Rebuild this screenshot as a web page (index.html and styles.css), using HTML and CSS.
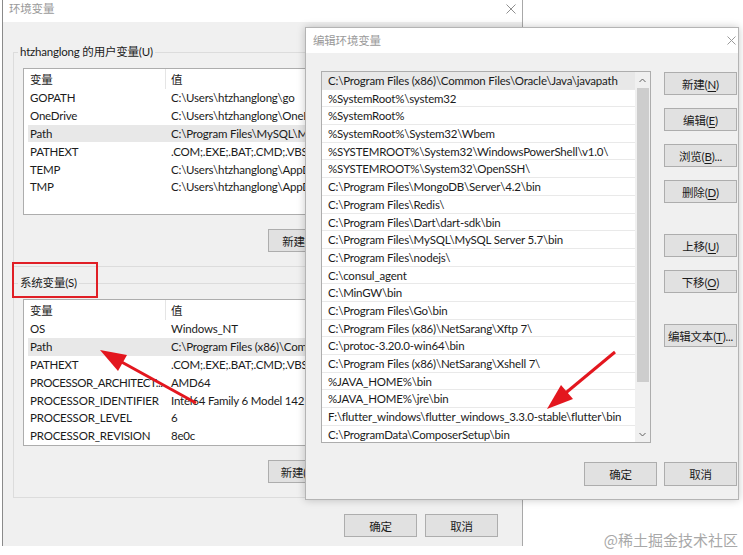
FILE: index.html
```html
<!DOCTYPE html>
<html lang="zh-CN">
<head>
    <meta charset="UTF-8">
    <title>环境变量</title>
    <link rel="stylesheet" href="styles.css">
</head>
<body>
<div class="desk">

    <!-- 环境变量 窗口 -->
    <div class="env-window">
        <div class="titlebar">
            <span class="title">环境变量</span>
            <svg class="close" width="10" height="10" viewBox="0 0 10 10"><path d="M0.5 0.5 L9.5 9.5 M9.5 0.5 L0.5 9.5" stroke="#8f8f8f" stroke-width="1"/></svg>
        </div>
        <div class="env-body">
            <fieldset class="group">
                <legend>htzhanglong 的用户变量(U)</legend>
                <div class="var-list">
                    <div class="var-head"><span>变量</span><span>值</span></div>
                    <div class="var-row"><span>GOPATH</span><span>C:\Users\htzhanglong\go</span></div>
                    <div class="var-row"><span>OneDrive</span><span>C:\Users\htzhanglong\OneDrive</span></div>
                    <div class="var-row sel"><span>Path</span><span>C:\Program Files\MySQL\MySQL Server 5.7\bin;</span></div>
                    <div class="var-row"><span>PATHEXT</span><span>.COM;.EXE;.BAT;.CMD;.VBS;.VBE;.JS;.JSE</span></div>
                    <div class="var-row"><span>TEMP</span><span>C:\Users\htzhanglong\AppData\Local\Temp</span></div>
                    <div class="var-row"><span>TMP</span><span>C:\Users\htzhanglong\AppData\Local\Temp</span></div>
                </div>
                <div class="btn-row">
                    <button class="btn">新建(<u>N</u>)...</button>
                </div>
            </fieldset>

            <fieldset class="group">
                <legend>系统变量(S)</legend>
                <div class="var-list">
                    <div class="var-head"><span>变量</span><span>值</span></div>
                    <div class="var-row"><span>OS</span><span>Windows_NT</span></div>
                    <div class="var-row sel"><span>Path</span><span>C:\Program Files (x86)\Common Files\Oracle\Java\javapath;</span></div>
                    <div class="var-row"><span>PATHEXT</span><span>.COM;.EXE;.BAT;.CMD;.VBS;.VBE;.JS;.JSE;.WSF</span></div>
                    <div class="var-row"><span class="tight">PROCESSOR_ARCHITECT...</span><span>AMD64</span></div>
                    <div class="var-row"><span>PROCESSOR_IDENTIFIER</span><span>Intel64 Family 6 Model 142 Stepping 10</span></div>
                    <div class="var-row"><span>PROCESSOR_LEVEL</span><span>6</span></div>
                    <div class="var-row"><span>PROCESSOR_REVISION</span><span>8e0c</span></div>
                </div>
                <div class="btn-row">
                    <button class="btn">新建(<u>W</u>)...</button>
                </div>
            </fieldset>

            <div class="dialog-btns">
                <button class="btn">确定</button>
                <button class="btn">取消</button>
            </div>
        </div>
    </div>

    <!-- 编辑环境变量 对话框 -->
    <div class="edit-dialog">
        <div class="titlebar dlg-title">
            <span class="title">编辑环境变量</span>
            <svg class="close" width="9" height="9" viewBox="0 0 9 9"><path d="M0.5 0.5 L8.5 8.5 M8.5 0.5 L0.5 8.5" stroke="#9a9a9a" stroke-width="1"/></svg>
        </div>
        <div class="edit-body">
            <div class="edit-main">
                <div class="path-list">
                    <div class="path-rows">
                        <div class="path-row sel">C:\Program Files (x86)\Common Files\Oracle\Java\javapath</div>
                        <div class="path-row">%SystemRoot%\system32</div>
                        <div class="path-row">%SystemRoot%</div>
                        <div class="path-row">%SystemRoot%\System32\Wbem</div>
                        <div class="path-row">%SYSTEMROOT%\System32\WindowsPowerShell\v1.0\</div>
                        <div class="path-row">%SYSTEMROOT%\System32\OpenSSH\</div>
                        <div class="path-row">C:\Program Files\MongoDB\Server\4.2\bin</div>
                        <div class="path-row">C:\Program Files\Redis\</div>
                        <div class="path-row">C:\Program Files\Dart\dart-sdk\bin</div>
                        <div class="path-row">C:\Program Files\MySQL\MySQL Server 5.7\bin</div>
                        <div class="path-row">C:\Program Files\nodejs\</div>
                        <div class="path-row">C:\consul_agent</div>
                        <div class="path-row">C:\MinGW\bin</div>
                        <div class="path-row">C:\Program Files\Go\bin</div>
                        <div class="path-row">C:\Program Files (x86)\NetSarang\Xftp 7\</div>
                        <div class="path-row">C:\protoc-3.20.0-win64\bin</div>
                        <div class="path-row">C:\Program Files (x86)\NetSarang\Xshell 7\</div>
                        <div class="path-row">%JAVA_HOME%\bin</div>
                        <div class="path-row">%JAVA_HOME%\jre\bin</div>
                        <div class="path-row">F:\flutter_windows\flutter_windows_3.3.0-stable\flutter\bin</div>
                        <div class="path-row">C:\ProgramData\ComposerSetup\bin</div>
                    </div>
                    <div class="scrollbar">
                        <div class="sb-arrow"><svg width="7" height="5" viewBox="0 0 7 5"><path d="M0.5 4 L3.5 1 L6.5 4" fill="none" stroke="#606060" stroke-width="1"/></svg></div>
                        <div class="sb-thumb"></div>
                        <div class="sb-space"></div>
                        <div class="sb-arrow"><svg width="7" height="5" viewBox="0 0 7 5"><path d="M0.5 1 L3.5 4 L6.5 1" fill="none" stroke="#606060" stroke-width="1"/></svg></div>
                    </div>
                </div>
                <div class="side-btns">
                    <button class="btn">新建(<u>N</u>)</button>
                    <button class="btn">编辑(<u>E</u>)</button>
                    <button class="btn">浏览(<u>B</u>)...</button>
                    <button class="btn">删除(<u>D</u>)</button>
                    <button class="btn gap-top">上移(<u>U</u>)</button>
                    <button class="btn">下移(<u>O</u>)</button>
                    <button class="btn gap-top">编辑文本(<u>T</u>)...</button>
                </div>
            </div>
            <div class="edit-foot">
                <button class="btn">确定</button>
                <button class="btn">取消</button>
            </div>
        </div>
    </div>

    <!-- 标注 -->
    <div class="mark-box"></div>
    <svg class="arrows" width="743" height="555" viewBox="0 0 743 555">
        <line x1="196" y1="403" x2="118" y2="360" stroke="#e3161e" stroke-width="3"/>
        <polygon points="100,350 127,355 118,371" fill="#e3161e"/>
        <line x1="615" y1="352" x2="562" y2="396" stroke="#e3161e" stroke-width="3"/>
        <polygon points="547,409 573,399 561,385" fill="#e3161e"/>
    </svg>
    <div class="watermark">@稀土掘金技术社区</div>
</div>
</body>
</html>
```

FILE: styles.css
```css
* { margin: 0; padding: 0; box-sizing: border-box; }

body {
    font-family: Lato, "Noto Sans CJK SC", sans-serif;
    font-size: 11.5px;
    letter-spacing: -0.2px;
    color: #1b1b1b;
    background: #ffffff;
}

.desk {
    position: relative;
    width: 743px;
    height: 555px;
    overflow: hidden;
}

/* 公共 */
.titlebar {
    display: flex;
    align-items: center;
    justify-content: space-between;
    background: #ffffff;
}

.title {
    color: #9a9a9a;
    line-height: 16px;
}

.close { display: block; }

.btn {
    width: 73px;
    height: 23px;
    background: #e1e1e1;
    border: 1px solid #adadad;
    font-family: inherit;
    font-size: 11.5px;
    letter-spacing: inherit;
    color: #1b1b1b;
    white-space: nowrap;
}

.btn u { text-decoration-thickness: 1px; text-underline-offset: 2px; }

/* 环境变量 窗口 */
.env-window {
    position: absolute;
    left: 2px;
    top: 0;
    width: 521px;
    height: 546px;
    background: #f0f0f0;
    border-left: 1px solid #8a8a8a;
    border-right: 1px solid #a8a8a8;
}

.env-window .titlebar {
    height: 22px;
    padding: 0 6px 4px 6px;
}

.env-body {
    padding: 22px 10px 0 10px;
}

.group {
    border: 1px solid #dcdcdc;
    padding: 8px 9px 14px;
}

.group + .group { margin-top: 8px; }

.group legend {
    line-height: 16px;
    padding: 0 2px;
    margin-left: -5px;
    color: #1b1b1b;
}

.var-list {
    height: 147px;
    background: #ffffff;
    border: 1px solid #adadad;
    padding-left: 4px;
    overflow: hidden;
}

/* 值列只露出到对话框左缘 */
.var-head,
.var-row {
    display: grid;
    grid-template-columns: 138px 139px;
    white-space: nowrap;
}

.var-head { height: 20px; }

.var-head span {
    display: flex;
    align-items: center;
    padding-left: 5px;
}

.var-head span:first-child {
    padding-left: 2px;
    border-right: 1px solid #e5e5e5;
}

.var-row {
    height: 17.8px;
    align-items: center;
}

.var-row span {
    overflow: hidden;
    padding-left: 5px;
}

.var-row span:first-child { padding-left: 2px; }

.var-row .tight { letter-spacing: -0.4px; }

.var-row.sel { background: #e8e8e8; }

.btn-row {
    display: flex;
    margin-top: 14px;
    padding-left: 245px;
}

.dialog-btns {
    display: flex;
    justify-content: flex-end;
    gap: 8px;
    margin-top: 16px;
    padding-right: 14px;
}

/* 编辑环境变量 对话框 */
.edit-dialog {
    position: absolute;
    left: 305px;
    top: 27px;
    width: 434px;
    height: 473px;
    background: #f0f0f0;
    border: 1px solid #b4b4b4;
    box-shadow: 0 0 8px rgba(0, 0, 0, 0.22);
    display: flex;
    flex-direction: column;
}

.dlg-title {
    height: 25px;
    padding: 0 2px 0 7px;
}

.edit-body {
    padding: 18px 0 0 15px;
}

.edit-main {
    display: flex;
    gap: 13px;
}

.path-list {
    width: 330px;
    height: 372px;
    background: #ffffff;
    border: 1px solid #adadad;
    display: flex;
}

.path-rows {
    flex: 1;
    overflow: hidden;
}

.path-row {
    height: 17.7px;
    line-height: 17px;
    padding-left: 6px;
    border-bottom: 1px solid #e9e9e9;
    white-space: nowrap;
    overflow: hidden;
}

.path-row.sel { background: #e8e8e8; }

.scrollbar {
    width: 15px;
    background: #f0f0f0;
    display: flex;
    flex-direction: column;
}

.sb-arrow {
    height: 16px;
    display: flex;
    align-items: center;
    justify-content: center;
}

.sb-thumb {
    height: 294px;
    margin: 0 1px 0 2px;
    background: #cdcdcd;
}

.sb-space { flex: 1; }

.side-btns {
    display: flex;
    flex-direction: column;
    gap: 13px;
    padding-top: 1px;
}

.side-btns .gap-top { margin-top: 18px; }

.edit-foot {
    display: flex;
    justify-content: flex-end;
    gap: 7px;
    margin-top: 19px;
    padding-right: 1px;
}

.edit-foot .btn { height: 24px; }

/* 标注 */
.mark-box {
    position: absolute;
    left: 12px;
    top: 262px;
    width: 86px;
    height: 36px;
    border: 2px solid #e01f26;
}

.arrows {
    position: absolute;
    left: 0;
    top: 0;
    pointer-events: none;
}

.watermark {
    position: absolute;
    right: 5px;
    top: 530px;
    font-family: "Noto Sans CJK SC", sans-serif;
    font-size: 15px;
    letter-spacing: 0;
    line-height: 20px;
    color: #a8a8a8;
}
```
